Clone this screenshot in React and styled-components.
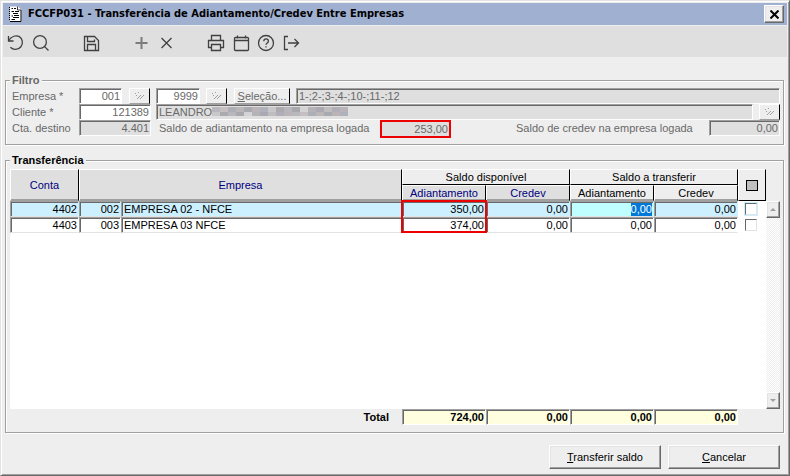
import React, { useEffect, useRef } from "react";
import styled, { createGlobalStyle, css } from "styled-components";

const banks = [
  { conta: "4402", cod: "002", nome: "EMPRESA 02 - NFCE", adiantamento: "350,00", active: true },
  { conta: "4403", cod: "003", nome: "EMPRESA 03 NFCE", adiantamento: "374,00", active: false },
];

const totals = [
  { label: "Total adiantamento disponível", value: "724,00" },
  { label: "Total credev disponível", value: "0,00" },
  { label: "Total adiantamento a transferir", value: "0,00" },
  { label: "Total credev a transferir", value: "0,00" },
];

const App = () => {
  const firstTransfer = useRef(null);

  useEffect(() => {
    firstTransfer.current.focus();
    firstTransfer.current.select();
  }, []);

  return (
    <>
      <GlobalStyle />
      <Window>
        <TitleBar>
          <DocumentIcon />
          <Title>FCCFP031 - Transferência de Adiantamento/Credev Entre Empresas</Title>
          <CloseButton type="button" aria-label="Fechar">
            <svg width="9" height="9" viewBox="0 0 9 9" aria-hidden="true">
              <path d="M0.5 0.5L8.5 8.5M8.5 0.5L0.5 8.5" stroke="#000" strokeWidth="2" />
            </svg>
          </CloseButton>
        </TitleBar>
        <Toolbar>
          <Tool label="Desfazer">
            <path d="M1.5 2v5h5" />
            <path d="M1.5 7C4 2.6 8.400 1.200 12 2.400A7 7 0 1 1 3.400 13.300" />
          </Tool>
          <Tool label="Pesquisar">
            <circle cx="8" cy="8" r="6.400" />
            <path d="M12.600 12.600L16.500 16.500" />
          </Tool>
          <ToolGap />
          <Tool label="Salvar">
            <path d="M2.500 2.500H12.500L16.500 6.500V16.500H2.500Z" />
            <path d="M5.500 2.500V7.500H12.500V5.500M5.500 16.500V10.500H13.500V16.500" />
          </Tool>
          <ToolGap />
          <Tool label="Incluir" soft>
            <path d="M9.500 3V15M3.500 9H15.500" />
          </Tool>
          <Tool label="Excluir">
            <path d="M4.500 4L14.500 14M14.500 4L4.500 14" />
          </Tool>
          <ToolGap />
          <Tool label="Imprimir">
            <path d="M4.500 6.500V1.500H13.500V6.500M4.500 13.500H1.500V6.500H16.500V13.500H13.500" />
            <path d="M4.500 10.500H13.500V16.500H4.500Z" />
          </Tool>
          <Tool label="Calendário">
            <path d="M4 3.500H3.500Q2.500 3.500 2.500 4.500V15.500Q2.500 16.500 3.500 16.500H15.500Q16.500 16.500 16.500 15.500V4.500Q16.500 3.500 15.500 3.500ZM2.500 6.500H16.500M5.500 1.500V4.500M13.500 1.500V4.500" />
          </Tool>
          <Tool label="Ajuda">
            <circle cx="9" cy="9" r="7.500" />
            <path d="M6.800 7.200C6.800 4.200 11.400 4.200 11.400 7.200C11.400 9 9 9 9 10.800M9 12.200V13.400" />
          </Tool>
          <Tool label="Sair">
            <path d="M6 2.500H2.500V15.500H6M6 9H16M12.500 5L16.500 9L12.500 13" />
          </Tool>
        </Toolbar>
        <Filter>
          <Legend>Filtro</Legend>
          <FilterRow>
            <FilterLabel htmlFor="empresa">Empresa *</FilterLabel>
            <FieldSlot>
              <Field id="empresa" $w={43} defaultValue="001" />
              <LookupButton />
            </FieldSlot>
            <Field $w={44} aria-label="Empresa final" defaultValue="9999" />
            <LookupButton $left={6} />
            <SelectionButton type="button">
              <u>S</u>eleção...
            </SelectionButton>
            <Field $fill $locked $start readOnly aria-label="Empresas selecionadas" value="1-;2-;3-;4-;10-;11-;12" />
          </FilterRow>
          <FilterRow>
            <FilterLabel htmlFor="cliente">Cliente *</FilterLabel>
            <FieldSlot>
              <Field id="cliente" $w={72} defaultValue="121389" />
            </FieldSlot>
            <NameBox>
              <Field $fill $locked $start readOnly aria-label="Nome do cliente" value="LEANDRO" />
              <NameMask />
            </NameBox>
            <LookupButton $left={6} />
          </FilterRow>
          <FilterRow>
            <FilterLabel htmlFor="destino">Cta. destino</FilterLabel>
            <FieldSlot>
              <Field id="destino" $w={72} $locked readOnly value="4.401" />
            </FieldSlot>
            <BalanceLabel htmlFor="saldo-adiantamento">Saldo de adiantamento na empresa logada</BalanceLabel>
            <MarkedField id="saldo-adiantamento" $w={71} $locked readOnly value="253,00" />
            <CredevLabel htmlFor="saldo-credev">Saldo de credev na empresa logada</CredevLabel>
            <Field id="saldo-credev" $w={71} $locked readOnly value="0,00" />
          </FilterRow>
        </Filter>
        <Transfer aria-labelledby="transferencia">
          <TransferTitle id="transferencia">Transferência</TransferTitle>
          <GridArea>
            <TableBox>
              <Table>
                <colgroup>
                  <Col $w={69} />
                  <Col $w={42} />
                  <col />
                  <Col $w={84} />
                  <Col $w={84} />
                  <Col $w={84} />
                  <Col $w={84} />
                  <Col $w={28} />
                </colgroup>
                <thead>
                  <tr>
                    <HeadCell rowSpan={2}>Conta</HeadCell>
                    <HeadCell rowSpan={2} colSpan={2}>Empresa</HeadCell>
                    <GroupCell colSpan={2}>Saldo disponível</GroupCell>
                    <GroupCell colSpan={2}>Saldo a transferir</GroupCell>
                    <MarkHead rowSpan={2}>
                      <MarkAll type="button" aria-label="Marcar todos" />
                    </MarkHead>
                  </tr>
                  <tr>
                    <HeadCell>Adiantamento</HeadCell>
                    <HeadCell>Credev</HeadCell>
                    <HeadCell $plain>Adiantamento</HeadCell>
                    <HeadCell $plain>Credev</HeadCell>
                  </tr>
                </thead>
                <tbody>
                  {banks.map((row, i) => (
                    <tr key={row.conta}>
                      <Cell $active={row.active}>{row.conta}</Cell>
                      <Cell $active={row.active}>{row.cod}</Cell>
                      <Cell $active={row.active} $start>{row.nome}</Cell>
                      <Cell $active={row.active}>
                        {row.adiantamento}
                        {i === 0 && <RedFrame />}
                      </Cell>
                      <Cell $active={row.active}>0,00</Cell>
                      <Cell $active={row.active} $editing={row.active}>
                        <CellInput
                          ref={i === 0 ? firstTransfer : null}
                          aria-label={`Adiantamento a transferir ${row.conta}`}
                          defaultValue="0,00"
                        />
                      </Cell>
                      <Cell $active={row.active}>
                        <CellInput aria-label={`Credev a transferir ${row.conta}`} defaultValue="0,00" />
                      </Cell>
                      <CheckCell>
                        <Check type="checkbox" $active={row.active} aria-label={`Transferir conta ${row.conta}`} />
                      </CheckCell>
                    </tr>
                  ))}
                </tbody>
              </Table>
            </TableBox>
            <Scrollbar>
              <ScrollButton type="button" aria-label="Rolar para cima">
                <svg width="6" height="3" viewBox="0 0 6 3" aria-hidden="true">
                  <path d="M0 3L3 0L6 3Z" fill="#a0a0a0" />
                </svg>
              </ScrollButton>
              <ScrollButton type="button" aria-label="Rolar para baixo">
                <svg width="6" height="3" viewBox="0 0 6 3" aria-hidden="true">
                  <path d="M0 0L3 3L6 0Z" fill="#a0a0a0" />
                </svg>
              </ScrollButton>
            </Scrollbar>
          </GridArea>
          <TotalRow>
            <TotalLabel>Total</TotalLabel>
            {totals.map((total) => (
              <TotalField key={total.label} $w={84} readOnly aria-label={total.label} value={total.value} />
            ))}
          </TotalRow>
        </Transfer>
        <Actions>
          <ActionButton type="button">
            <u>T</u>ransferir saldo
          </ActionButton>
          <ActionButton type="button">
            <u>C</u>ancelar
          </ActionButton>
        </Actions>
      </Window>
    </>
  );
};

const Tool = ({ label, soft, children }) => (
  <ToolButton type="button" aria-label={label} $soft={soft}>
    <svg width="18" height="18" viewBox="0 0 18 18" aria-hidden="true">
      {children}
    </svg>
  </ToolButton>
);

const DocumentIcon = () => (
  <svg width="13" height="16" viewBox="0 0 13 16" aria-hidden="true">
    <path d="M1 0.500H9L12.500 4V15.500H1Z" fill="#fff" />
    <path d="M12 4V15.500H1" fill="none" stroke="#000" />
    <path d="M8.500 0.500V4H12" fill="none" stroke="#333" />
    <path d="M0.500 1V15" stroke="#000" strokeDasharray="1 1" />
    <path d="M2.500 2.500H4M5 2.500H7M2.500 5.500H5M6 5.500H10M4 7.500H9M2.500 10H4M5 9.500H10M4 11.500H10M2.500 13.500H6" stroke="#000" />
  </svg>
);

const LookupButton = ({ $left }) => (
  <Lookup type="button" aria-label="Procurar" $left={$left}>
    <svg width="11" height="8" viewBox="0 0 11 8" shapeRendering="crispEdges" aria-hidden="true">
      <path d="M1 1h1v1h-1zM4 0h1v1h-1zM2 3h1v1h-1z" fill="#a0a0a0" />
      <path d="M6 3h1v1h-1zM5 4h1v1h-1zM4 5h1v1h-1zM3 6h1v1h-1z" fill="#a0a0a0" />
      <path d="M9 3h1v1h-1zM8 4h1v1h-1zM7 5h1v1h-1zM6 6h1v1h-1z" fill="#a0a0a0" />
    </svg>
  </Lookup>
);

const maskTones = [
  "#b9b8bc", "#c6bfc2", "#aeaeb6", "#b9b7b7", "#a9a9b0", "#bab4b8", "#b0b1ba", "#c9c8c8", "#aca9af",
  "#b9b7be", "#a8a8ad", "#d4d4d5", "#b5b3b8", "#abaab3", "#bfbdbd", "#b0aeb8", "#b8b4b8",
];

const NameMask = () => (
  <MaskDrawing viewBox="0 0 136 12" preserveAspectRatio="none" aria-hidden="true">
    {maskTones.map((tone, i) => (
      <React.Fragment key={i}>
        <rect x={i * 8} y="1" width="8" height="5" fill={tone} />
        <rect x={i * 8} y="6" width="8" height="4" fill={maskTones[(i + 7) % maskTones.length]} />
      </React.Fragment>
    ))}
  </MaskDrawing>
);

const GlobalStyle = createGlobalStyle`
  * {
    box-sizing: border-box;
  }

  body {
    margin: 0;
    background: #eeeeee;
    color: #000;
    font: 11px/16px "Liberation Sans", Arial, sans-serif;
  }

  button,
  input {
    margin: 0;
    font: inherit;
    color: inherit;
  }
`;

const sunken = css`
  border: 1px solid;
  border-color: #a0a0a0 #fff #fff #a0a0a0;
  box-shadow: inset 1px 1px 0 #696969;
`;

const raised = css`
  border: 1px solid;
  border-color: #fff #696969 #696969 #fff;
  box-shadow: inset -1px -1px 0 #a0a0a0, inset 1px 1px 0 #e3e3e3;
  background: #eeeeee;
`;

const Window = styled.main`
  display: flex;
  flex-direction: column;
  min-height: 100vh;
  padding: 1px;
  background: #eeeeee;
  border: 1px solid;
  border-color: #e3e3e3 #696969 #696969 #e3e3e3;
  box-shadow: inset 1px 1px 0 #fff, inset -1px -1px 0 #a0a0a0;
`;

const TitleBar = styled.header`
  display: flex;
  align-items: center;
  gap: 6px;
  height: 22px;
  margin: 1px 1px 0;
  padding: 0 3px 0 6px;
  background: #a0b0d0;
`;

const Title = styled.h1`
  flex: 1;
  margin: 0;
  font: bold 11px/22px "DejaVu Sans Condensed", "DejaVu Sans", sans-serif;
  white-space: nowrap;
`;

const CloseButton = styled.button`
  ${raised}
  display: flex;
  align-items: center;
  justify-content: center;
  width: 20px;
  height: 18px;
  padding: 0;
`;

const Toolbar = styled.div`
  display: flex;
  height: 31px;
  margin: 1px 1px 0;
  padding-top: 4px;
  background: #dfdfdf;
`;

const ToolButton = styled.button`
  width: 25px;
  height: 25px;
  padding: 0;
  border: 0;
  background: none;

  svg {
    display: block;
    margin: 0 auto;
    fill: none;
    stroke: ${({ $soft }) => ($soft ? "#7c7c7c" : "#404040")};
    stroke-width: ${({ $soft }) => ($soft ? 2 : 1.3)};
  }
`;

const ToolGap = styled.span`
  width: 25px;
`;

const group = css`
  min-width: 0;
  margin: 0 4px 0 3px;
  border: 1px solid #a0a0a0;
  box-shadow: 1px 1px 0 #fff, inset 1px 1px 0 #fff;
`;

const groupTitle = css`
  padding: 0 2px;
  font-size: 11px;
  font-weight: bold;
  line-height: 12px;
  background: #eeeeee;
`;

const Filter = styled.fieldset`
  ${group}
  margin-top: 17px;
  padding: 2px 3px 8px 6px;
  color: #696969;
`;

const Legend = styled.legend`
  ${groupTitle}
  margin-left: -2px;
`;

const FilterRow = styled.div`
  display: flex;
  height: 16px;
`;

const FilterLabel = styled.label`
  width: 67px;
`;

const FieldSlot = styled.div`
  display: flex;
  gap: 7px;
  width: 72px;
  margin-right: 5px;
`;

const Field = styled.input`
  ${sunken}
  flex: ${({ $fill }) => ($fill ? "1" : "none")};
  min-width: 0;
  width: ${({ $w }) => ($w ? `${$w}px` : "auto")};
  height: 16px;
  padding: 0 1px 0 2px;
  border-radius: 0;
  background: ${({ $locked }) => ($locked ? "#dfdfdf" : "#fff")};
  line-height: 14px;
  text-align: ${({ $start }) => ($start ? "left" : "right")};
  outline: none;
`;

const MarkedField = styled(Field)`
  height: 18px;
  border: 2px solid #ec0000;
  box-shadow: none;
`;

const Lookup = styled.button`
  display: flex;
  align-items: center;
  justify-content: center;
  width: 21px;
  height: 16px;
  margin-left: ${({ $left }) => $left || 0}px;
  padding: 0;
  border: 1px solid;
  border-color: #fff #000 #a0a0a0 #fff;
  background: #eeeeee;
`;

const SelectionButton = styled.button`
  width: 56px;
  height: 16px;
  margin: 0 6px 0 7px;
  padding: 0;
  border: 1px solid;
  border-color: #fff #000 #a0a0a0 #fff;
  background: #eeeeee;
  line-height: 14px;
`;

const NameBox = styled.div`
  position: relative;
  display: flex;
  flex: 1;
`;

const MaskDrawing = styled.svg`
  position: absolute;
  top: 2px;
  left: 56px;
  width: 136px;
  height: 12px;
`;

const BalanceLabel = styled.label`
  width: 221px;
  margin-left: 3px;
  white-space: nowrap;
`;

const CredevLabel = styled.label`
  width: 193px;
  margin-left: auto;
  white-space: nowrap;
`;

const Transfer = styled.section`
  ${group}
  display: flex;
  flex: 1;
  flex-direction: column;
  margin-top: 15px;
  padding: 0 3px 7px 4px;
`;

const TransferTitle = styled.h2`
  ${groupTitle}
  align-self: flex-start;
  margin: -7px 0 3px;
`;

const GridArea = styled.div`
  display: flex;
  flex: 1;
`;

const TableBox = styled.div`
  flex: 1;
  background: #fff;
`;

const Table = styled.table`
  width: 100%;
  border-collapse: separate;
  border-spacing: 0;
  table-layout: fixed;
`;

const Col = styled.col`
  width: ${({ $w }) => $w}px;
`;

const HeadCell = styled.th`
  height: 16px;
  padding: 0;
  border: 1px solid;
  border-color: #fff #000 #a0a0a0 #fff;
  box-shadow: inset 0 -1px 0 #a0a0a0;
  background: ${({ $plain }) => ($plain ? "#eeeeee" : "#dfdfdf")};
  color: ${({ $plain }) => ($plain ? "#000" : "#000080")};
  font-weight: normal;
  line-height: 14px;
`;

const GroupCell = styled(HeadCell)`
  border-bottom-color: #000;
  box-shadow: none;
  background: #eeeeee;
  color: #000;
`;

const MarkHead = styled(GroupCell)`
  line-height: 0;
`;

const MarkAll = styled.button`
  width: 12px;
  height: 11px;
  padding: 0;
  border: 1px solid #000;
  background: #c0c0c0;
`;

const cellColor = ({ $active, $editing }) => {
  if ($editing) return "#c0ffff";
  return $active ? "#ccf0ff" : "#fff";
};

const Cell = styled.td`
  position: relative;
  height: 16px;
  padding: 1px 1px 0 2px;
  border: 1px solid;
  border-color: #a0a0a0 transparent #e3e3e3 #a0a0a0;
  box-shadow: inset 1px 1px 0 #696969;
  background: ${cellColor};
  line-height: 13px;
  text-align: ${({ $start }) => ($start ? "left" : "right")};
  white-space: nowrap;
`;

const CellInput = styled.input`
  display: block;
  width: 100%;
  height: 13px;
  padding: 0;
  border: 0;
  background: transparent;
  line-height: 13px;
  text-align: right;
  outline: none;

  &::selection {
    background: #0078d7;
    color: #fff;
  }
`;

const RedFrame = styled.span`
  position: absolute;
  z-index: 1;
  top: -2px;
  right: -2px;
  bottom: -17px;
  left: -2px;
  border: 2px solid #ec0000;
  pointer-events: none;
`;

const CheckCell = styled.td`
  height: 16px;
  padding: 0 0 0 7px;
  line-height: 0;
`;

const Check = styled.input`
  display: block;
  width: 12px;
  height: 12px;
  appearance: none;
  background: #fff;
  border: 1px solid;
  border-color: #696969 #e3e3e3 #e3e3e3 #696969;
  outline: 1px solid ${({ $active }) => ($active ? "#ccf0ff" : "#fff")};
`;

const Scrollbar = styled.div`
  display: flex;
  flex-direction: column;
  justify-content: space-between;
  width: 14px;
  margin-top: 32px;
  background: repeating-conic-gradient(#fff 0 25%, #eeeeee 0 50%) 0 0 / 2px 2px;
`;

const ScrollButton = styled.button`
  ${raised}
  display: flex;
  align-items: center;
  justify-content: center;
  width: 14px;
  height: 17px;
  padding: 0;
`;

const TotalRow = styled.div`
  display: flex;
  justify-content: flex-end;
  height: 16px;
  padding-right: 42px;
  font-weight: bold;
`;

const TotalLabel = styled.span`
  margin-right: 13px;
`;

const TotalField = styled(Field)`
  background: #ffffe0;
`;

const Actions = styled.footer`
  display: flex;
  justify-content: flex-end;
  gap: 7px;
  padding: 12px 8px 5px;
`;

const ActionButton = styled.button`
  ${raised}
  width: 112px;
  height: 24px;
  padding: 0;
`;

export default App;
